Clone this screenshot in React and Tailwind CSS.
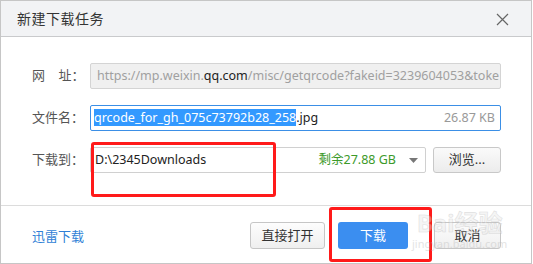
import React from 'react';

const font = { fontFamily: '"Noto Sans", "Noto Sans CJK SC", sans-serif' };

export default function App() {
  return (
    <div className="w-[533px] h-[264px] bg-white relative overflow-hidden" style={font}>
      {/* dialog */}
      <div className="w-[532px] h-[264px] border border-[#c6c6c6] flex flex-col">
        {/* title bar */}
        <div className="h-[36px] bg-[#f2f3f5] border-b border-[#c9cacc] flex items-center justify-between pl-[16px] pr-[22px]">
          <span className="text-[14px] text-[#333] tracking-[0.5px]">新建下载任务</span>
          <svg width="13" height="13" viewBox="0 0 13 13" className="mt-[1px]">
            <path d="M1 1L12 12M12 1L1 12" stroke="#666" strokeWidth="1.2" />
          </svg>
        </div>

        {/* body */}
        <div className="flex flex-col gap-[16px] pt-[26px] pl-[31px] h-[168px]">
          <div className="flex items-center h-[26px]">
            <span className="w-[58px] text-[13px] text-[#555]">网&nbsp;&nbsp;&nbsp;&nbsp;址：</span>
            <div className="w-[411px] h-[26px] bg-[#f0f0f0] border border-[#d4d4d4] rounded-[2px] flex items-center px-[6px] overflow-hidden whitespace-nowrap text-[12.5px] text-[#a0a0a0]">
              https://mp.weixin.<span className="text-[#222]">qq.com</span>/misc/getqrcode?fakeid=3239604053&amp;toke
            </div>
          </div>

          <div className="flex items-center h-[26px]">
            <span className="w-[58px] text-[13px] text-[#555]">文件名：</span>
            <div className="w-[411px] h-[26px] bg-white border border-[#3b8fe6] rounded-[2px] flex items-center justify-between pl-[3px] pr-[5px] whitespace-nowrap text-[12.5px]">
              <span>
                <span className="bg-[#3399ff] text-white">qrcode_for_gh_075c73792b28_258</span>
                <span className="text-[#222]">.jpg</span>
              </span>
              <span className="text-[#999]">26.87 KB</span>
            </div>
          </div>

          <div className="flex items-center h-[26px]">
            <span className="w-[58px] text-[13px] text-[#555]">下载到：</span>
            <div className="w-[336px] h-[26px] bg-white border border-[#d0d0d0] rounded-[2px] flex items-center justify-between pl-[4px] pr-[7px] whitespace-nowrap text-[12.5px]">
              <span className="text-[#222]">D:\2345Downloads</span>
              <span className="flex items-center gap-[13px]">
                <span className="text-[#3c9a2a]">剩余27.88 GB</span>
                <svg width="9" height="5" viewBox="0 0 9 5">
                  <path d="M0 0H9L4.5 5Z" fill="#777" />
                </svg>
              </span>
            </div>
            <button className="ml-[7px] w-[68px] h-[26px] rounded-[3px] border border-[#c8c8c8] bg-gradient-to-b from-[#fafafa] to-[#ececec] text-[13px] text-[#333]">
              浏览...
            </button>
          </div>
        </div>

        {/* footer */}
        <div className="border-t border-[#dcdcdc] flex items-center h-[58px] pl-[31px] pr-[30px]">
          <span className="text-[13px] text-[#2f7fd6] mt-[4px]">迅雷下载</span>
          <div className="ml-auto flex items-center mt-[2px]">
            <button className="w-[75px] h-[27px] rounded-[3px] border border-[#c6c6c6] bg-gradient-to-b from-[#fdfdfd] to-[#efefef] text-[13px] text-[#333]">
              直接打开
            </button>
            <button className="ml-[13px] w-[70px] h-[27px] rounded-[3px] bg-[#3b8ef0] text-[13px] text-white">
              下载
            </button>
            <button className="ml-[26px] w-[67px] h-[27px] rounded-[3px] border border-[#c6c6c6] bg-gradient-to-b from-[#fdfdfd] to-[#efefef] text-[13px] text-[#333]">
              取消
            </button>
          </div>
        </div>
      </div>

      {/* red annotation boxes */}
      <div className="absolute left-[91px] top-[142px] w-[185px] h-[55px] border-[3px] border-[#ff1a1a] rounded-[3px]" />
      <div className="absolute left-[329px] top-[207px] w-[103px] h-[55px] border-[3px] border-[#ff1a1a] rounded-[3px]" />

      {/* watermark */}
      <div className="absolute left-[412px] top-[208px] flex flex-col items-center opacity-40 pointer-events-none">
        <span className="text-[24px] leading-[30px] font-bold text-[#e8e8e8]" style={{ WebkitTextStroke: '0.6px #b0b0b0' }}>Bai经验</span>
        <span className="text-[11px] leading-[12px] text-[#bbb]">jingyan.baidu.com</span>
      </div>
    </div>
  );
}
